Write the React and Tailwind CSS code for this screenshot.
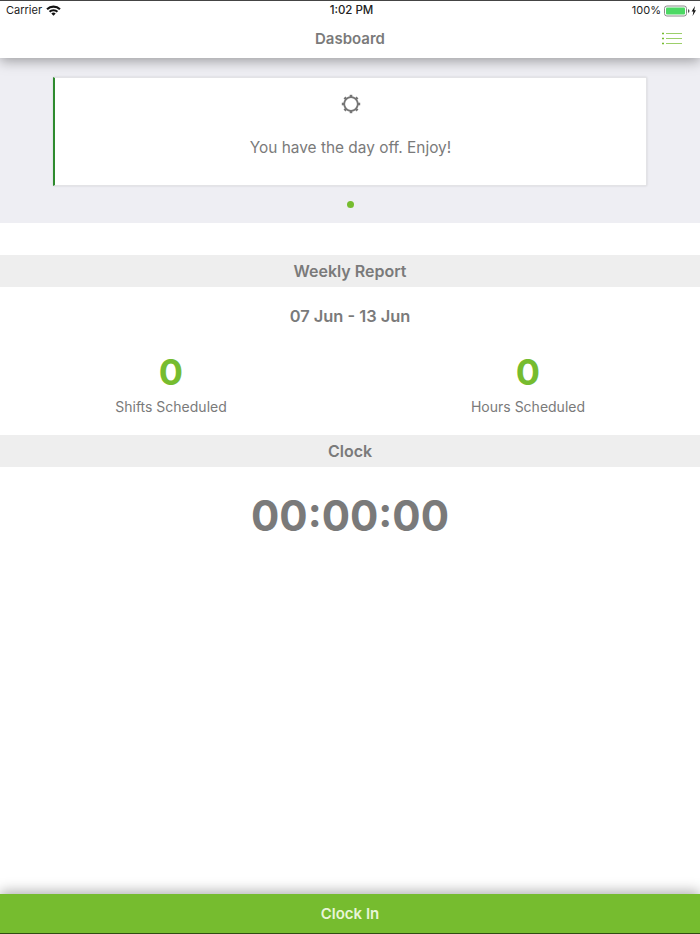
const font = { fontFamily: "Inter, 'Liberation Sans', sans-serif" };

function Wifi() {
  return (
    <svg width="15" height="11" viewBox="0 0 15 11" className="ml-[4px] -mt-[1px]">
      <path d="M0.3 3.6 A10.2 10.2 0 0 1 14.7 3.6 L13.2 5.1 A8.1 8.1 0 0 0 1.8 5.1 Z" fill="#111" />
      <path d="M2.8 6.1 A6.7 6.7 0 0 1 12.2 6.1 L10.7 7.6 A4.6 4.6 0 0 0 4.3 7.6 Z" fill="#111" />
      <path d="M5.3 8.6 A3.1 3.1 0 0 1 9.7 8.6 L7.5 10.8 Z" fill="#111" />
    </svg>
  );
}

function Battery() {
  return (
    <svg width="33" height="12" viewBox="0 0 33 12" className="ml-[3px]">
      <rect x="0.5" y="1" width="22" height="10" rx="2.4" fill="none" stroke="#8a8a8a" strokeWidth="1" />
      <rect x="2" y="2.5" width="19" height="7" rx="1" fill="#4cd964" />
      <path d="M24 4.3 c1.2 0 1.4 .8 1.4 1.7 s-.2 1.7-1.4 1.7 z" fill="#555" />
      <path d="M31 1 L27.6 6.6 H29.4 L28.6 11 L32 5.2 H30.2 Z" fill="#111" />
    </svg>
  );
}

function Menu() {
  return (
    <svg width="20" height="14" viewBox="0 0 20 14">
      {[1.5, 6.5, 11.5].map((y) => (
        <g key={y}>
          <rect x="0" y={y - 0.75} width="2" height="1.5" fill="#76bc2f" />
          <rect x="4" y={y - 0.5} width="16" height="1" fill="#9ccf6a" />
        </g>
      ))}
    </svg>
  );
}

function Sun() {
  const teeth = [0, 45, 90, 135, 180, 225, 270, 315];
  return (
    <svg width="20" height="20" viewBox="0 0 20 20">
      <circle cx="10" cy="10" r="6.8" fill="none" stroke="#757575" strokeWidth="1.8" />
      {teeth.map((a) => (
        <rect key={a} x="8.7" y="0.8" width="2.6" height="2.6" fill="#757575" transform={`rotate(${a} 10 10)`} />
      ))}
    </svg>
  );
}

function SectionBar({ children }) {
  return (
    <div className="h-8 bg-[#eeeeee] flex items-center justify-center text-[16px] font-semibold text-[#7a7a7a]">
      {children}
    </div>
  );
}

function Stat({ label }) {
  return (
    <div className="flex flex-col items-center">
      <div className="text-[36px] leading-[44px] font-bold text-[#76bc2f]">0</div>
      <div className="mt-[3px] text-[14px] leading-[20px] text-[#7a7a7a]">{label}</div>
    </div>
  );
}

export default function App() {
  return (
    <div style={font} className="relative w-[700px] h-[934px] bg-white flex flex-col overflow-hidden">
      <div className="relative z-10 bg-white shadow-[0_3px_12px_rgba(0,0,0,0.35)]">
        <div className="h-[20px] border-t border-[#444] flex items-center justify-between pl-[6px] pr-[3px] text-[11px] text-[#222]">
          <div className="flex-1 flex items-center">
            <span>Carrier</span>
            <Wifi />
          </div>
          <div className="flex-1 text-center text-[11.5px] font-medium">1:02 PM</div>
          <div className="flex-1 flex items-center justify-end">
            <span>100%</span>
            <Battery />
          </div>
        </div>
        <div className="relative h-[38px] flex items-center justify-center">
          <span className="text-[15px] font-semibold text-[#7a7a7a]">Dasboard</span>
          <div className="absolute right-[18px] top-[12px]">
            <Menu />
          </div>
        </div>
      </div>

      <div className="h-[165px] bg-[#eeeef3] pt-[19px] flex flex-col items-center">
        <div className="w-[594px] h-[109px] bg-white border border-[#e3e3e6] border-l-2 border-l-[#2e8b2e] shadow-[0_0_2px_rgba(0,0,0,0.12)] flex flex-col items-center pt-[16px]">
          <Sun />
          <div className="mt-[24px] text-[15.4px] leading-[20px] text-[#7a7a7a]">You have the day off. Enjoy!</div>
        </div>
        <div className="mt-[15px] w-[7px] h-[7px] rounded-full bg-[#76bc2f]"></div>
      </div>

      <div className="h-8"></div>
      <SectionBar>Weekly Report</SectionBar>
      <div className="h-[148px] flex flex-col">
        <div className="mt-[19px] text-center text-[16.4px] leading-[20px] font-semibold text-[#7a7a7a]">07 Jun - 13 Jun</div>
        <div className="mt-[24px] flex justify-between">
          <div className="w-[342px]"><Stat label="Shifts Scheduled" /></div>
          <div className="w-[344px]"><Stat label="Hours Scheduled" /></div>
        </div>
      </div>
      <SectionBar>Clock</SectionBar>
      <div className="mt-[21px] text-center text-[42px] leading-[56px] font-bold text-[#7a7a7a]">00:00:00</div>

      <div className="mt-auto relative h-[40px] bg-[#76bc2f] border-b border-[#2f4f12] flex items-center justify-center pt-[1px] text-[15px] font-semibold text-[#e8f5d8] shadow-[0_-3px_12px_rgba(0,0,0,0.3)]">
        Clock In
      </div>
    </div>
  );
}
